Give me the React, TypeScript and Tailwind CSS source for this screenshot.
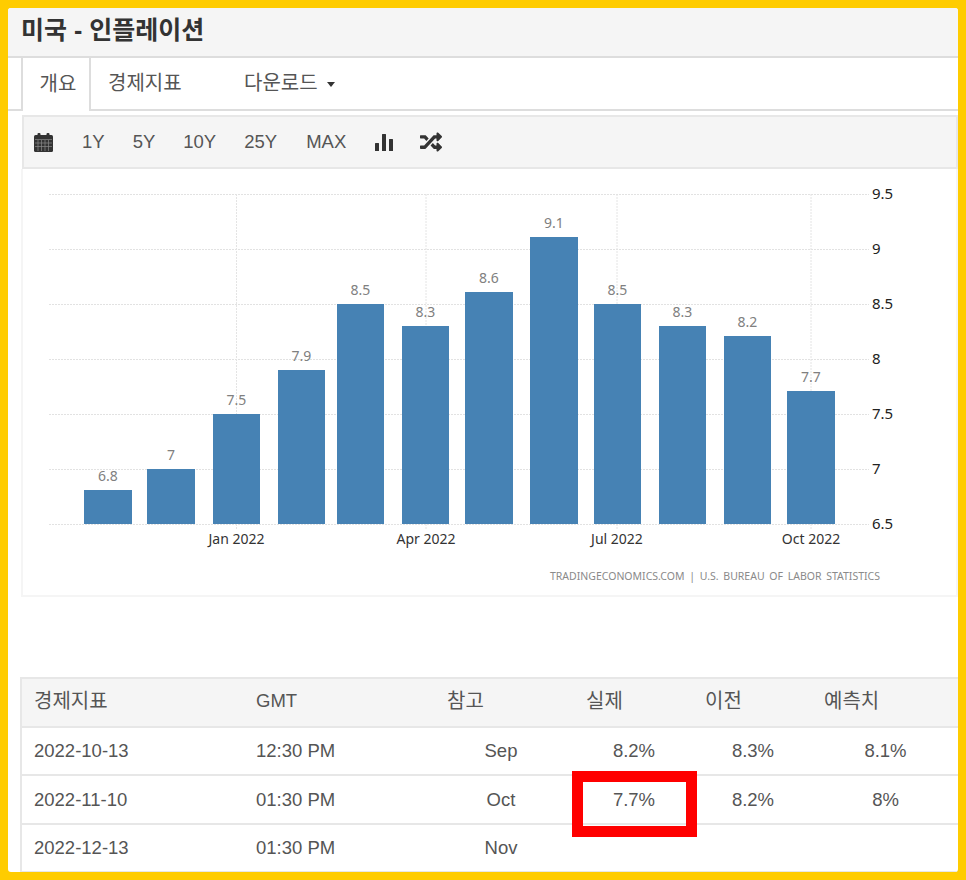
import { FaRandom } from "react-icons/fa";

const font = "font-['Liberation_Sans','Noto_Sans_CJK_KR',sans-serif]";

const bars = [
  { x: 84, w: 48, top: 490, label: "6.8" },
  { x: 147, w: 48, top: 469, label: "7" },
  { x: 213, w: 47, top: 414, label: "7.5" },
  { x: 278, w: 47, top: 370, label: "7.9" },
  { x: 337, w: 47, top: 304, label: "8.5" },
  { x: 402, w: 47, top: 326, label: "8.3" },
  { x: 465, w: 48, top: 292, label: "8.6" },
  { x: 530, w: 48, top: 237, label: "9.1" },
  { x: 594, w: 47, top: 304, label: "8.5" },
  { x: 659, w: 47, top: 326, label: "8.3" },
  { x: 724, w: 47, top: 336, label: "8.2" },
  { x: 787, w: 48, top: 391, label: "7.7" },
];

const yTicks = [
  { y: 194, label: "9.5" },
  { y: 249, label: "9" },
  { y: 304, label: "8.5" },
  { y: 359, label: "8" },
  { y: 414, label: "7.5" },
  { y: 469, label: "7" },
  { y: 524, label: "6.5" },
];

const xTicks = [
  { x: 236.5, label: "Jan 2022" },
  { x: 426, label: "Apr 2022" },
  { x: 617, label: "Jul 2022" },
  { x: 811, label: "Oct 2022" },
];

const rows = [
  { date: "2022-10-13", time: "12:30 PM", ref: "Sep", actual: "8.2%", prev: "8.3%", cons: "8.1%", h: "h-[48px]" },
  { date: "2022-11-10", time: "01:30 PM", ref: "Oct", actual: "7.7%", prev: "8.2%", cons: "8%", h: "h-[49px]" },
  { date: "2022-12-13", time: "01:30 PM", ref: "Nov", actual: "", prev: "", cons: "", h: "h-[48px]" },
];

function Chart() {
  // coordinates are page pixels, the viewBox starts at the panel's top left corner
  return (
    <svg width="935" height="426" viewBox="23 169 935 426" className="block">
      {yTicks.map((t) => (
        <line key={t.y} x1="49" x2="869" y1={t.y + 0.5} y2={t.y + 0.5} stroke="#e2e2e2" strokeDasharray="2 1" />
      ))}
      {xTicks.map((t) => (
        <line key={t.x} x1={t.x} x2={t.x} y1="194" y2="530" stroke="#e4e4e4" strokeDasharray="2 1" />
      ))}
      {bars.map((b, i) => (
        <g key={i}>
          <rect x={b.x} y={b.top} width={b.w} height={524 - b.top} fill="#4682b4" />
          <text x={b.x + b.w / 2} y={b.top - 9} textAnchor="middle" fontSize="14" fill="#808080" fontFamily="'Noto Sans',sans-serif">
            {b.label}
          </text>
        </g>
      ))}
      {yTicks.map((t) => (
        <text key={t.y} x="872" y={t.y + 5} fontSize="15" fill="#222222" fontFamily="'Noto Sans',sans-serif">
          {t.label}
        </text>
      ))}
      {xTicks.map((t) => (
        <text key={t.x} x={t.x} y="544" textAnchor="middle" fontSize="14" fill="#333333" fontFamily="'Noto Sans',sans-serif">
          {t.label}
        </text>
      ))}
      <text x="880" y="580" textAnchor="end" fontSize="10.5" fill="#8a8a8a" fontFamily="'Noto Sans',sans-serif" wordSpacing="2">
        TRADINGECONOMICS.COM | U.S. BUREAU OF LABOR STATISTICS
      </text>
    </svg>
  );
}

function CalendarIcon() {
  return (
    <svg width="19" height="19" viewBox="0 0 19 19" className="ml-[10px]">
      <rect x="0" y="2" width="19" height="17" rx="1.5" fill="#333333" />
      <rect x="3.5" y="0" width="3" height="4" rx="1" fill="#333333" />
      <rect x="12.5" y="0" width="3" height="4" rx="1" fill="#333333" />
      <g stroke="#8a8a8a" strokeWidth="0.7">
        <line x1="1" x2="18" y1="6.5" y2="6.5" />
        <line x1="1" x2="18" y1="10" y2="10" />
        <line x1="1" x2="18" y1="13.5" y2="13.5" />
        <line x1="4" x2="4" y1="7" y2="18" />
        <line x1="7.5" x2="7.5" y1="7" y2="18" />
        <line x1="11" x2="11" y1="7" y2="18" />
        <line x1="14.5" x2="14.5" y1="7" y2="18" />
      </g>
    </svg>
  );
}

function StatsIcon() {
  return (
    <svg width="18" height="18" viewBox="0 0 18 18" fill="#333333">
      <rect x="0" y="10" width="4" height="8" rx="0.5" />
      <rect x="7" y="1" width="4" height="17" rx="0.5" />
      <rect x="14" y="6" width="4" height="12" rx="0.5" />
    </svg>
  );
}

export default function App() {
  return (
    <div className={`relative h-[880px] w-[966px] overflow-hidden bg-[#ffcc00] p-2 ${font}`}>
      <div className="h-[864px] overflow-hidden rounded-[3px] bg-white text-[#555555]">
        <div className="flex h-[50px] items-center border-b-2 border-[#dddddd] bg-[#f5f5f5] pb-[3px] pl-[13px]">
          <h1 className="text-[25px] font-bold text-[#333333]">미국 - 인플레이션</h1>
        </div>

        <div className="flex h-[53px] border-b-2 border-[#dddddd] pl-[13px] text-[20px]">
          <div className="-mb-[2px] flex w-[70px] items-center justify-center border-x-2 border-[#dddddd] bg-white pb-[2px] pl-1">개요</div>
          <div className="flex w-[153px] items-center pb-[2px] pl-[17px]">경제지표</div>
          <div className="flex items-center gap-[9px] pb-[2px]">
            다운로드
            <span className="mt-[3px] border-x-[4px] border-t-[5px] border-x-transparent border-t-[#333333]" />
          </div>
        </div>

        <div className="ml-[14px] mt-[4px] flex h-[54px] items-center border-2 border-[#e7e7e7] bg-[#f5f5f5] text-[18.5px]">
          <CalendarIcon />
          <span className="ml-[29px]">1Y</span>
          <span className="ml-[28px]">5Y</span>
          <span className="ml-[28px]">10Y</span>
          <span className="ml-[28px]">25Y</span>
          <span className="ml-[29px]">MAX</span>
          <span className="ml-[29px]"><StatsIcon /></span>
          <FaRandom className="ml-[27px] text-[#333333]" size={22} />
        </div>

        <div className="ml-[13px] border-x-2 border-b-2 border-[#f5f5f5]">
          <Chart />
        </div>

        <table className="ml-[12px] mt-[80px] w-[938px] table-fixed border-collapse text-[18.5px]">
          <colgroup>
            <col className="w-[223px]" />
            <col className="w-[191px]" />
            <col className="w-[140px]" />
            <col className="w-[118px]" />
            <col className="w-[120px]" />
            <col className="w-[146px]" />
          </colgroup>
          <thead>
            <tr className="h-[49px] border-2 border-[#e7e7e7] bg-[#f5f5f5] text-left text-[20px]">
              <th className="pb-1 pl-3 font-normal">경제지표</th>
              <th className="pb-1 pl-3 text-[18.5px] font-normal">GMT</th>
              <th className="pb-1 pl-3 font-normal">참고</th>
              <th className="pb-1 pl-[11px] font-normal">실제</th>
              <th className="pb-1 pl-3 font-normal">이전</th>
              <th className="pb-1 pl-[11px] font-normal">예측치</th>
            </tr>
          </thead>
          <tbody>
            {rows.map((r) => (
              <tr key={r.date} className={`${r.h} border-2 border-[#e7e7e7]`}>
                <td className="pl-3">{r.date}</td>
                <td className="pl-3">{r.time}</td>
                <td className="pr-2 text-center">{r.ref}</td>
                <td className="text-center">{r.actual}</td>
                <td className="text-center">{r.prev}</td>
                <td className="text-center">{r.cons}</td>
              </tr>
            ))}
          </tbody>
        </table>
      </div>

      <div className="absolute left-[572px] top-[771px] h-[66px] w-[125px] border-[11px] border-[#ff0000]" />
    </div>
  );
}
